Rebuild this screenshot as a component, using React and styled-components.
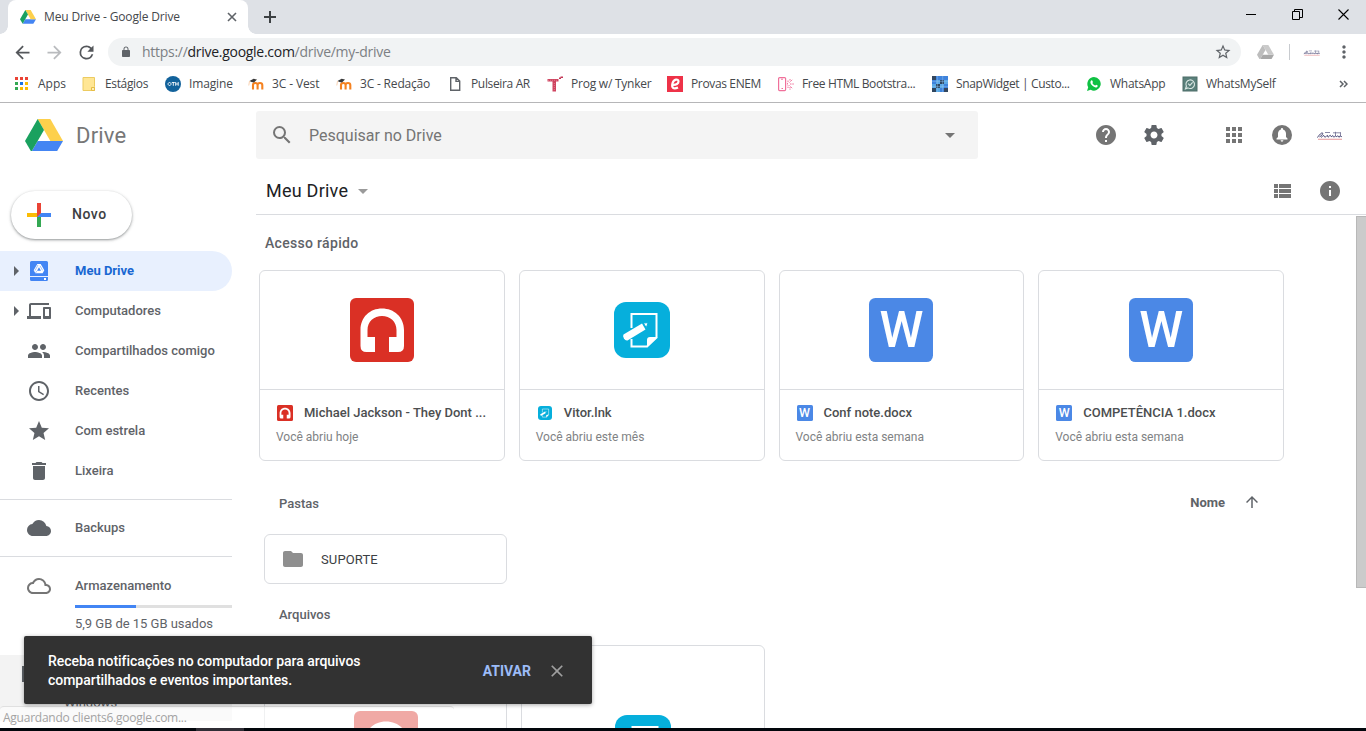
import React from "react";
import styled, { createGlobalStyle } from "styled-components";

const Global = createGlobalStyle`
  * { box-sizing: border-box; }
  html, body { margin: 0; padding: 0; overflow: hidden; background: #fff; }
  svg { display: block; flex: none; }
`;

/* ---------- icons ---------- */
const PATHS = {
  back: "M20 11H7.83l5.59-5.59L12 4l-8 8 8 8 1.41-1.41L7.83 13H20v-2z",
  forward: "M12 4l-1.41 1.41L16.17 11H4v2h12.17l-5.58 5.59L12 20l8-8z",
  reload: "M17.65 6.35A7.96 7.96 0 0 0 12 4a8 8 0 1 0 7.73 10h-2.08A6 6 0 1 1 12 6c1.66 0 3.14.69 4.22 1.78L13 11h7V4l-2.35 2.35z",
  lock: "M18 8h-1V6c0-2.76-2.24-5-5-5S7 3.24 7 6v2H6c-1.1 0-2 .9-2 2v10c0 1.100.9 2 2 2h12c1.1 0 2-.9 2-2V10c0-1.100-.9-2-2-2zM8.900 8V6c0-1.710 1.390-3.100 3.100-3.100s3.100 1.390 3.100 3.100v2H8.900z",
  starBorder: "M22 9.240l-7.190-.620L12 2 9.190 8.630 2 9.240l5.460 4.730L5.820 21 12 17.270 18.180 21l-1.630-7.030L22 9.240zM12 15.400l-3.760 2.270 1-4.280-3.320-2.880 4.380-.380L12 6.100l1.710 4.040 4.380.380-3.320 2.880 1 4.280L12 15.400z",
  search: "M15.500 14h-.79l-.28-.27A6.471 6.471 0 0 0 16 9.500 6.500 6.500 0 1 0 9.500 16c1.610 0 3.090-.59 4.230-1.570l.27.28v.79l5 4.990L20.490 19l-4.990-5zm-6 0C7.010 14 5 11.990 5 9.500S7.010 5 9.500 5 14 7.010 14 9.500 11.990 14 9.500 14z",
  drop: "M7 10l5 5 5-5z",
  caret: "M10 17l5-5-5-5z",
  help: "M12 2C6.480 2 2 6.480 2 12s4.480 10 10 10 10-4.480 10-10S17.520 2 12 2zm1 17h-2v-2h2v2zm2.070-7.750l-.9.920C13.450 12.900 13 13.500 13 15h-2v-.5c0-1.100.450-2.100 1.170-2.830l1.240-1.260c.370-.360.590-.860.590-1.410 0-1.100-.9-2-2-2s-2 .9-2 2H8c0-2.210 1.790-4 4-4s4 1.790 4 4c0 .880-.360 1.680-.930 2.250z",
  gear: "M19.430 12.980c.04-.32.07-.64.07-.98s-.03-.66-.07-.98l2.110-1.650c.19-.15.24-.42.12-.64l-2-3.460c-.12-.22-.39-.3-.61-.22l-2.490 1c-.52-.4-1.080-.73-1.690-.98l-.38-2.650A.488.488 0 0 0 14 2h-4c-.25 0-.46.18-.49.42l-.38 2.650c-.61.25-1.170.59-1.690.98l-2.490-1c-.23-.09-.49 0-.61.22l-2 3.460c-.13.22-.07.49.12.64l2.110 1.650c-.04.32-.07.65-.07.98s.03.66.07.98l-2.110 1.650c-.19.15-.24.42-.12.64l2 3.460c.12.22.39.3.61.22l2.490-1c.52.4 1.080.73 1.690.98l.38 2.650c.03.24.24.42.49.42h4c.25 0 .46-.18.49-.42l.38-2.650c.61-.25 1.170-.59 1.690-.98l2.490 1c.23.09.49 0 .61-.22l2-3.460c.12-.22.07-.49-.12-.64l-2.110-1.650zM12 15.500c-1.930 0-3.500-1.570-3.500-3.500s1.570-3.500 3.500-3.500 3.500 1.570 3.500 3.500-1.570 3.500-3.500 3.500z",
  apps: "M4 8h4V4H4v4zm6 12h4v-4h-4v4zm-6 0h4v-4H4v4zm0-6h4v-4H4v4zm6 0h4v-4h-4v4zm6-10v4h4V4h-4zm-6 4h4V4h-4v4zm6 6h4v-4h-4v4zm0 6h4v-4h-4v4z",
  list: "M4 14h4v-4H4v4zm0 5h4v-4H4v4zM4 9h4V5H4v4zm5 5h12v-4H9v4zm0 5h12v-4H9v4zM9 5v4h12V5H9z",
  info: "M12 2C6.480 2 2 6.480 2 12s4.480 10 10 10 10-4.480 10-10S17.520 2 12 2zm1 15h-2v-6h2v6zm0-8h-2V7h2v2z",
  devices: "M4 6h18V4H4c-1.100 0-2 .9-2 2v11H0v3h14v-3H4V6zm19 2h-6c-.55 0-1 .45-1 1v10c0 .55.45 1 1 1h6c.55 0 1-.45 1-1V9c0-.55-.45-1-1-1zm-1 9h-4v-7h4v7z",
  people: "M16 11c1.660 0 2.990-1.340 2.990-3S17.660 5 16 5s-3 1.340-3 3 1.340 3 3 3zm-8 0c1.660 0 2.990-1.340 2.990-3S9.660 5 8 5 5 6.340 5 8s1.340 3 3 3zm0 2c-2.330 0-7 1.170-7 3.500V19h14v-2.500C15 14.170 10.330 13 8 13zm8 0c-.29 0-.62.02-.97.05C16.190 13.890 17 15.020 17 16.500V19h6v-2.500c0-2.330-4.670-3.500-7-3.500z",
  clock: "M11.990 2C6.470 2 2 6.480 2 12s4.470 10 9.990 10C17.520 22 22 17.520 22 12S17.520 2 11.990 2zM12 20c-4.420 0-8-3.580-8-8s3.580-8 8-8 8 3.580 8 8-3.580 8-8 8zm.5-13H11v6l5.250 3.150.75-1.230-4.500-2.670z",
  star: "M12 17.270L18.180 21l-1.640-7.030L22 9.240l-7.190-.61L12 2 9.190 8.630 2 9.240l5.460 4.730L5.820 21z",
  trash: "M6 19c0 1.100.9 2 2 2h8c1.100 0 2-.9 2-2V7H6v12zM19 4h-3.500l-1-1h-5l-1 1H5v2h14V4z",
  cloud: "M19.350 10.040A7.490 7.490 0 0 0 12 4C9.110 4 6.600 5.640 5.350 8.040A5.994 5.994 0 0 0 0 14c0 3.310 2.690 6 6 6h13c2.760 0 5-2.240 5-5 0-2.640-2.050-4.780-4.650-4.960z",
  cloudOutline: "M19.350 10.040A7.490 7.490 0 0 0 12 4C9.110 4 6.600 5.640 5.350 8.040A5.994 5.994 0 0 0 0 14c0 3.310 2.690 6 6 6h13c2.760 0 5-2.240 5-5 0-2.640-2.050-4.780-4.650-4.960zM19 18H6c-2.210 0-4-1.790-4-4s1.790-4 4-4h.71C7.370 7.690 9.480 6 12 6c3.040 0 5.500 2.460 5.500 5.500v.5H19c1.660 0 3 1.340 3 3s-1.340 3-3 3z",
  folder: "M10 4H4c-1.100 0-2 .9-2 2v12c0 1.100.9 2 2 2h16c1.100 0 2-.9 2-2V8c0-1.100-.9-2-2-2h-8l-2-2z",
  up: "M4 12l1.410 1.410L11 7.830V20h2V7.830l5.580 5.590L20 12l-8-8-8 8z",
  close: "M19 6.410L17.590 5 12 10.590 6.410 5 5 6.410 10.590 12 5 17.590 6.410 19 12 13.410 17.590 19 19 17.590 13.410 12z",
  dots: "M12 8c1.100 0 2-.9 2-2s-.9-2-2-2-2 .9-2 2 .9 2 2 2zm0 2c-1.100 0-2 .9-2 2s.9 2 2 2 2-.9 2-2-.9-2-2-2zm0 6c-1.100 0-2 .9-2 2s.9 2 2 2 2-.9 2-2-.9-2-2-2z",
};
const Icon = ({ name, size = 24, color = "#757575" }) => (
  <svg width={size} height={size} viewBox="0 0 24 24" fill={color}><path d={PATHS[name]} /></svg>
);

const DriveLogo = ({ width, gray }) => {
  const [g, b, y] = gray ? ["#bdbdbd", "#a8a8a8", "#cacaca"] : ["#1aa15f", "#4485f3", "#fdd04c"];
  return (
    <svg width={width} height={width * 0.8662} viewBox="0 0 1443 1250">
      <path fill={b} d="M240 1250L481 833H1443L1202 1250z" />
      <path fill={y} d="M962 833H1443L962 0H481z" />
      <path fill={g} d="M0 833L240 1250 722 417 481 0z" />
    </svg>
  );
};

const Signature = ({ width }) => (
  <svg width={width} height={width / 2} viewBox="0 0 28 14" fill="none">
    <path d="M1.500 9.500c2-3 4-5 5-4.500s-1 3-3 3.800M5.500 9.500c1-2 2.500-2.500 2.500-1.500s1.500 1.500 2.500.2 1.200-.9 1.200.2 1.200.6 2-.8 1 1.800 2 1 .8-1.800 1.500-.2 1.500.4 2-.6.8 1.600 1.600.8 1.200-1.400 1.700 0 1 .6 1.500-.6.8 1.200 1.800.6" stroke="#3b3a6b" strokeWidth="1" />
    <path d="M9 4.500h5M17 4.800h8M19.500 3.800v4M24.500 4.500v4" stroke="#6c6b91" strokeWidth=".8" />
    <path d="M2 11.300H26" stroke="#eba7aa" strokeWidth="1.200" />
  </svg>
);

const Bell = () => (
  <svg width="24" height="24" viewBox="0 0 24 24">
    <circle cx="12" cy="12" r="10" fill="#757575" />
    <path fill="#fff" d="M6.500 16.500v-1l1.500-1.500V10.500C8 8.500 9.200 6.900 11 6.400V5.900c0-1.200 2-1.200 2 0v.5c1.800.5 3 2.100 3 4.100V14l1.500 1.500v1zM10.600 17.300h2.800a1.400 1.400 0 0 1-2.800 0z" />
  </svg>
);

const MoodleIcon = () => (
  <svg width="16" height="16" viewBox="0 0 16 16" fill="none">
    <path d="M5 13.500V9c0-2.700 4.600-2.700 4.600 0V13.500M9.600 9c0-2.700 4.700-2.700 4.700 0V13.500" stroke="#f58220" strokeWidth="2.100" />
    <path d="M1.500 5L5.600 2.800 9 3.600 6 6.600 3.500 6z" fill="#3a3a3a" />
    <path d="M1.500 5L.8 9.500" stroke="#f7c79e" strokeWidth=".8" />
  </svg>
);

const BOOK_ICONS = {
  apps: (
    <svg width="16" height="16" viewBox="0 0 16 16">
      {["#ea4335", "#ea4335", "#ea4335", "#34a853", "#1a73e8", "#fbbc04", "#34a853", "#fbbc04", "#fbbc04"].map((c, i) => (
        <rect key={i} x={1 + (i % 3) * 5} y={1 + Math.floor(i / 3) * 5} width="3" height="3" fill={c} />
      ))}
    </svg>
  ),
  folder: (
    <svg width="16" height="16" viewBox="0 0 16 16">
      <path d="M2 1.500h11.500v9l-.0 4H2z" fill="#ffe694" stroke="#eccb61" />
      <path d="M10.500 14.500v-3h3v3z" fill="#ffefb5" stroke="#e6bd44" />
    </svg>
  ),
  oth: (
    <svg width="16" height="16" viewBox="0 0 16 16">
      <circle cx="8" cy="8" r="8" fill="#12629b" />
      <path d="M4.500 6.500a1.500 1.500 0 1 0 .1 0M6.800 6.500h3M8.300 6.500v3.300M10.700 6v3.800M13.200 6v3.800M10.700 8h2.500" stroke="#fff" strokeWidth=".9" fill="none" />
    </svg>
  ),
  moodle: <MoodleIcon />,
  file: (
    <svg width="16" height="16" viewBox="0 0 16 16">
      <path d="M3.700 1.700h5.600l3.400 3.400v9.200H3.700zM9 1.700v3.700h3.700" fill="#fff" stroke="#5f6368" strokeWidth="1.400" />
    </svg>
  ),
  tynker: (
    <svg width="16" height="16" viewBox="0 0 16 16">
      <path d="M0.500 3h11v2.500H9v10H5.500v-10h-5z" fill="#cf4460" />
      <path d="M12 2.500V1.500h1.500V.5H16v1.500h-2v1h-2z" fill="#c23655" />
      <path d="M1 4.300h10M7.300 7v8" stroke="#e58a9b" strokeWidth=".8" strokeDasharray="1 1" />
    </svg>
  ),
  enem: (
    <svg width="16" height="16" viewBox="0 0 16 16">
      <rect width="16" height="16" fill="#ee3248" />
      <path d="M5.500 8.800c4 .2 6-1.300 6-3.300 0-3-4.800-2.500-6 1.700-1.200 4.500 1 6.500 5.500 4.300" stroke="#fff" strokeWidth="2.200" fill="none" />
    </svg>
  ),
  html: (
    <svg width="16" height="16" viewBox="0 0 16 16" fill="none" stroke="#f0709a">
      <rect x=".6" y="1.600" width="7" height="13" rx="1" strokeWidth="1.200" />
      <path d="M3 3.200h2M3.500 12.500h1.500" />
      <path d="M10 4.500V7L9 8l1 1.200V12M12 3v2M11.500 6.500l3-3M12 8h4M11.500 9.500l3 3M12 11v3" strokeDasharray="1.500 .8" />
    </svg>
  ),
  snap: (
    <svg width="16" height="16" viewBox="0 0 16 16">
      {["#33475f", "#3f83dc", "#3f83dc", "#3f83dc", "#3f83dc", "#5aa9e6", "#2e465f", "#5aa9e6", "#5aa9e6", "#2e465f", "#5aa9e6", "#3f83dc", "#2e465f", "#5aa9e6", "#3f83dc", "#33475f"].map((c, i) => (
        <rect key={i} x={(i % 4) * 4} y={Math.floor(i / 4) * 4} width="4" height="4" fill={c} />
      ))}
      <path d="M5.300 0v16M10.700 0v16M0 5.300h16M0 10.700h16" stroke="#8ec1ee" strokeWidth=".5" />
    </svg>
  ),
  whatsapp: (
    <svg width="16" height="16" viewBox="0 0 16 16">
      <path d="M8 1a6.800 6.800 0 1 1-3.300 12.800L1 15l1.200-3.700A6.900 6.900 0 0 1 8 1z" fill="#0fc143" />
      <path d="M5.200 4.600c.6-.6 1-.4 1.200.1l.5 1.200c.1.400-.6 1-.6 1.200.6 1.200 1.500 2 2.700 2.500.4 0 .9-1 1.200-.9l1.400.7c.5.3-.2 1.900-1.500 2-2.500.1-5.700-3-5.700-5.100 0-.7.400-1.300.8-1.700z" fill="#fff" />
    </svg>
  ),
  myself: (
    <svg width="16" height="16" viewBox="0 0 16 16" fill="none" stroke="#dbe7e4">
      <rect x="1" y="1" width="14" height="14" fill="#5a807b" stroke="#4c6d69" />
      <path d="M3.500 12.800l.9-2.600a4.300 4.300 0 1 1 1.600 1.700z" strokeWidth="1.100" />
      <path d="M6.200 7.700l1.700 1.700 2.700-3" strokeWidth="1.100" />
    </svg>
  ),
};

/* ---------- browser chrome ---------- */
const Window = styled.div`
  position: relative;
  width: 1366px;
  height: 731px;
  display: flex;
  flex-direction: column;
  overflow: hidden;
  background: #fff;
  font-family: Roboto, "Liberation Sans", sans-serif;
`;
const TabStrip = styled.div`
  height: 34px;
  flex: none;
  display: flex;
  background: #dee1e6;
`;
const TabFoot = styled.div`
  width: 8px;
  background: radial-gradient(circle at ${(p) => (p.$right ? "100% 0" : "0 0")}, #dee1e6 7.500px, #fff 8px) bottom / 8px 8px no-repeat;
`;
const Tab = styled.div`
  width: 240px;
  padding: 0 10px 0 12px;
  display: flex;
  align-items: center;
  background: #fff;
  border-radius: 8px 8px 0 0;
`;
const TabTitle = styled.span`
  flex: 1;
  margin-left: 8px;
  font: 12px/16px "Open Sans", "Noto Sans", sans-serif;
  letter-spacing: -0.150px;
  color: #45484c;
  white-space: nowrap;
`;
const NewTab = styled.div`
  display: flex;
  align-items: center;
  margin-left: 8px;
`;
const WindowControls = styled.div`
  margin-left: auto;
  height: 28px;
  display: flex;
  align-items: center;
  gap: 35px;
  padding-right: 17px;
`;
const Toolbar = styled.div`
  height: 36px;
  flex: none;
  display: flex;
  align-items: center;
`;
const NavButtons = styled.div`
  display: flex;
  gap: 11px;
  width: 108px;
  padding-left: 12px;
`;
const Omnibox = styled.div`
  width: 1133px;
  height: 28px;
  padding: 0 9px 0 12px;
  display: flex;
  align-items: center;
  border-radius: 14px;
  background: #f1f3f4;
`;
const Url = styled.span`
  flex: 1;
  margin-left: 10px;
  font: 14px/20px "Open Sans", "Noto Sans", sans-serif;
  letter-spacing: -0.280px;
  color: #7c8084;
  b { font-weight: 400; color: #202124; }
`;
const Extensions = styled.div`
  flex: 1;
  display: flex;
  align-items: center;
  padding-left: 16px;
`;
const Separator = styled.div`
  width: 1px;
  height: 16px;
  margin: 0 13px 0 15px;
  background: #c8cbcf;
`;
const DotsSlot = styled.div`
  margin-left: 13px;
`;
const Bookmarks = styled.div`
  height: 33px;
  flex: none;
  display: flex;
  padding: 0 18px 4px 14px;
  align-items: center;
  border-bottom: 1px solid #b6b6b8;
`;
const Bookmark = styled.div`
  width: ${(p) => p.$w}px;
  display: flex;
  align-items: center;
  gap: 8px;
  font: 12px/16px "Open Sans", "Noto Sans", sans-serif;
  letter-spacing: ${(p) => p.$track || 0}px;
  color: #45484c;
  white-space: nowrap;
`;
const More = styled.div`
  margin-left: auto;
`;
const Taskbar = styled.div`
  height: 3px;
  flex: none;
  display: flex;
  padding-left: 196px;
  background: #02060c;
`;
const TaskbarItem = styled.div`
  width: 48px;
  background: #2f2d35;
`;

/* ---------- drive page ---------- */
const Page = styled.div`
  height: 625px;
  flex: none;
  overflow: hidden;
`;
const Header = styled.header`
  height: 64px;
  display: flex;
  align-items: center;
`;
const Brand = styled.div`
  width: 256px;
  padding-left: 25px;
  display: flex;
  align-items: center;
  gap: 13px;
  font-size: 22px;
  letter-spacing: 0.200px;
  color: #777;
`;
const SearchBox = styled.div`
  width: 722px;
  height: 48px;
  padding: 0 16px 0 14px;
  display: flex;
  align-items: center;
  border-radius: 3px;
  background: #f4f4f4;
`;
const Placeholder = styled.span`
  flex: 1;
  margin-left: 15px;
  font-size: 16px;
  letter-spacing: 0;
  color: #757575;
`;
const HeaderActions = styled.div`
  display: flex;
  align-items: center;
  padding-left: 116px;
`;
const Spacer = styled.div`
  width: ${(p) => p.$w}px;
  flex: none;
`;
const Body = styled.div`
  display: flex;
`;
const Sidebar = styled.nav`
  width: 256px;
  flex: none;
  padding-top: 24px;
`;
const NewButton = styled.div`
  width: 121px;
  height: 48px;
  margin-left: 11px;
  padding-left: 16px;
  display: flex;
  align-items: center;
  gap: 21px;
  border-radius: 24px;
  background: #fff;
  box-shadow: 0 1px 2px rgba(60, 64, 67, 0.400), 0 1px 3px 1px rgba(60, 64, 67, 0.150);
  font-size: 14px;
  font-weight: 500;
  letter-spacing: 0.550px;
  color: #3c4043;
`;
const NewLabel = styled.span`
  padding-bottom: 2px;
`;
const NavList = styled.div`
  margin-top: 12px;
`;
const NavItem = styled.div`
  width: 232px;
  height: ${(p) => p.$h || 40}px;
  display: flex;
  align-items: center;
  border-radius: 0 20px 20px 0;
  background: ${(p) => (p.$active ? "#e8f0fe" : "transparent")};
  color: ${(p) => (p.$active ? "#1967d2" : "#5f6368")};
  font-size: 13px;
  font-weight: ${(p) => (p.$active ? 700 : 500)};
  letter-spacing: 0;
`;
const CaretSlot = styled.div`
  width: 27px;
  display: flex;
  padding-left: 4px;
`;
const NavLabel = styled.span`
  margin-left: 24px;
  margin-top: -1px;
`;
const Rule = styled.div`
  width: 232px;
  height: 1px;
  margin: ${(p) => p.$m || "0"};
  background: #dadce0;
`;
const Storage = styled.div`
  margin: -1px 0 0 75px;
  width: 157px;
`;
const Meter = styled.div`
  height: 3px;
  background: linear-gradient(to right, #4285f4 61px, #e0e0e0 61px);
`;
const StorageText = styled.div`
  margin-top: 7px;
  font-size: 13px;
  line-height: 18px;
  letter-spacing: -0.020px;
  color: #5f6368;
`;
const DesktopPromo = styled.div`
  width: 232px;
  height: 66px;
  margin-top: 22px;
  padding: 11px 0 0 22px;
  display: flex;
  background: #f3f3f3;
  font-size: 13px;
  line-height: 16px;
  color: #5f6368;
`;
const PromoIcon = styled.div`
  width: 18px;
  height: 16px;
  margin-right: 24px;
  background: #5f6368;
`;
const PromoText = styled.div`
  padding-top: 29px;
  letter-spacing: 0;
`;
const Main = styled.main`
  width: 1110px;
`;
const TitleBar = styled.div`
  height: 48px;
  display: flex;
  align-items: center;
  padding: 0 24px 0 10px;
  border-bottom: 1px solid #dadce0;
`;
const Title = styled.h1`
  flex: 1;
  display: flex;
  align-items: center;
  gap: 3px;
  margin: 0;
  font-size: 18px;
  font-weight: 400;
  letter-spacing: 0.240px;
  color: #202124;
`;
const Content = styled.div`
  display: flex;
  height: 513px;
`;
const Scroll = styled.div`
  flex: 1;
  overflow: hidden;
`;
const ScrollTrack = styled.div`
  width: 10px;
  padding-top: 1px;
`;
const ScrollThumb = styled.div`
  height: 372px;
  border: 1px solid #b8b8b8;
  border-right: 0;
  background: #cbcbcb;
`;
const Quick = styled.h2`
  margin: 0;
  padding: 19px 0 0 9px;
  height: 55px;
  font-size: 14px;
  line-height: 18px;
  font-weight: 500;
  letter-spacing: 0.310px;
  color: #5f6368;
`;
const CardGrid = styled.div`
  width: 1025px;
  margin-left: 3px;
  display: grid;
  grid-template-columns: repeat(4, 1fr);
  gap: 14px;
`;
const Card = styled.div`
  min-width: 0;
  height: 191px;
  border: 1px solid #dadce0;
  border-radius: 6px;
`;
const Preview = styled.div`
  height: 119px;
  display: flex;
  align-items: center;
  justify-content: center;
  border-bottom: 1px solid #dadce0;
`;
const CardInfo = styled.div`
  padding: 13px 16px 0;
`;
const CardName = styled.div`
  height: 20px;
  display: flex;
  align-items: center;
  font-size: 13px;
  font-weight: 500;
  letter-spacing: 0;
  color: #4c4e50;
`;
const SmallIcon = styled.div`
  width: 28px;
  flex: none;
  display: flex;
  padding-left: ${(p) => (p.$link ? 2 : 1)}px;
`;
const NameText = styled.span`
  padding-bottom: 2px;
  white-space: nowrap;
`;
const CardMeta = styled.div`
  margin-top: 5px;
  font-size: 12px;
  line-height: 18px;
  letter-spacing: 0;
  color: #808284;
`;
const WordTile = styled.div`
  width: ${(p) => p.$s}px;
  height: ${(p) => p.$s}px;
  padding-top: ${(p) => p.$s / 24}px;
  display: flex;
  align-items: center;
  justify-content: center;
  border-radius: ${(p) => p.$s / 10}px;
  background: #4b88e6;
  color: #fff;
  font-size: ${(p) => p.$s * 0.780}px;
  font-weight: 500;
  line-height: 1;
  letter-spacing: 0;
`;
const SectionRow = styled.div`
  display: flex;
  align-items: center;
  height: 20px;
  margin-top: ${(p) => p.$top}px;
  padding: 0 95px 0 23px;
  font-size: 13px;
  font-weight: 500;
  letter-spacing: 0;
  color: #5f6368;
`;
const Sort = styled.div`
  margin-left: auto;
  display: flex;
  align-items: center;
  gap: 18px;
  font-weight: 700;
  margin-top: -2px;
`;
const Folder = styled.div`
  width: 243px;
  height: 50px;
  margin: 21px 0 0 8px;
  padding-left: 16px;
  display: flex;
  align-items: center;
  gap: 16px;
  border: 1px solid #dadce0;
  border-radius: 6px;
  font-size: 13px;
  letter-spacing: 0.120px;
  color: #3c4043;
`;
const Files = styled.div`
  display: flex;
  gap: 14px;
  margin: 21px 0 0 8px;
`;
const FileCard = styled.div`
  width: ${(p) => p.$w}px;
  height: 191px;
  padding-top: ${(p) => p.$pad}px;
  display: flex;
  justify-content: center;
  align-items: flex-start;
  border: 1px solid #dadce0;
  border-radius: 6px;
`;

/* ---------- overlays ---------- */
const StatusBubble = styled.div`
  position: absolute;
  left: 0;
  top: 706px;
  width: 454px;
  height: 22px;
  padding-left: 3px;
  border-top: 1px solid rgba(190, 190, 190, 0.450);
  border-radius: 4px 4px 0 0;
  background: rgba(255, 255, 255, 0.590);
  font: 12px/22px "Open Sans", "Noto Sans", sans-serif;
  letter-spacing: -0.250px;
  color: #a3a3a3;
`;
const Toast = styled.div`
  position: absolute;
  left: 24px;
  top: 636px;
  width: 568px;
  height: 68px;
  padding: 2px 25px 0 24px;
  display: flex;
  align-items: center;
  border-radius: 2px;
  background: #323232;
  box-shadow: 0 1px 4px rgba(0, 0, 0, 0.350);
  color: #fff;
`;
const ToastText = styled.p`
  flex: 1;
  margin: 0;
  font-size: 14px;
  line-height: 19px;
  font-weight: 500;
  letter-spacing: -0.040px;
`;
const ToastAction = styled.span`
  margin-right: 16px;
  font-size: 14px;
  font-weight: 700;
  color: #9cbcf8;
`;

const AudioIcon = ({ size }) => (
  <svg width={size} height={size} viewBox="0 0 64 64">
    <rect width="64" height="64" rx="6" fill="#da3025" />
    <path fill="#fff" d="M10.500 32C10.500 19 20 10.500 32 10.500S54 19 54 32V48q0 6-6 6H39V39H46.500V32C46.500 23.500 40 18 32 18S17.500 23.500 17.500 32V39H25V54H16.500q-6 0-6-6z" />
  </svg>
);
const LinkIcon = ({ size }) => (
  <svg width={size} height={size} viewBox="0 0 56 56">
    <rect width="56" height="56" rx="12" fill="#06afdc" />
    <path d="M17.500 26V12H42.500V35.500L33 44.500H17.500V37" fill="none" stroke="#fff" strokeWidth="2" />
    <path d="M33 45.500V38q0-3 3-3h7.500z" fill="#fff" />
    <path d="M9.500 32.500L28 21.500l3.500 6L13.500 38.500q-2.200.4-3.600-2T9.500 32.500z" fill="#fff" />
    <path d="M29.300 21l4.800-.3-1.800 5z" fill="#fff" stroke="#06afdc" strokeWidth="1" />
  </svg>
);
const FileIcon = ({ kind, large }) =>
  kind === "audio" ? <AudioIcon size={large ? 64 : 16} />
  : kind === "link" ? <LinkIcon size={large ? 56 : 14} />
  : <WordTile $s={large ? 64 : 16}>W</WordTile>;

const MyDriveIcon = () => (
  <svg width="24" height="24" viewBox="0 0 24 24">
    <path d="M4.500 2h15A1.500 1.500 0 0 1 21 3.500V17H3V3.500A1.500 1.500 0 0 1 4.500 2zM3 18h18v2.500a1.500 1.500 0 0 1-1.500 1.500h-15A1.500 1.500 0 0 1 3 20.500z" fill="#4285f4" />
    <path d="M10.300 5h3.400l3.600 6.300-1.700 3H8.400l-1.700-3z" fill="#fff" />
    <path d="M12 8.200l2 3.600h-4z" fill="#4285f4" />
    <path d="M11 6l-3 5.600M13 6.800l2.600 4.600M9.700 12.200L8.500 14" stroke="#4285f4" strokeWidth=".5" />
    <rect x="17" y="19" width="2" height="2" fill="#fff" />
  </svg>
);
const PlusIcon = () => (
  <svg width="24" height="24" viewBox="0 0 24 24">
    <path d="M10 0h4v10l-4 4z" fill="#ea4335" />
    <path d="M0 10h10v4H0z" fill="#fbbc04" />
    <path d="M10 14l4-4v14h-4z" fill="#34a853" />
    <path d="M14 10h10v4H10z" fill="#4285f4" />
    <path d="M10 10h4l-4 4z" fill="#ea4335" />
  </svg>
);

const bookmarks = [
  ["apps", "Apps", 67, 0],
  ["folder", "Estágios", 84, -0.35],
  ["oth", "Imagine", 83, -0.15],
  ["moodle", "3C - Vest", 88, -0.12],
  ["moodle", "3C - Redação", 111, -0.18],
  ["file", "Pulseira AR", 100, -0.35],
  ["tynker", "Prog w/ Tynker", 120, -0.23],
  ["enem", "Provas ENEM", 111, -0.36],
  ["html", "Free HTML Bootstra...", 154, -0.36],
  ["snap", "SnapWidget | Custo...", 154, -0.37],
  ["whatsapp", "WhatsApp", 96, -0.25],
  ["myself", "WhatsMySelf", 100, -0.25],
];
const nav = [
  ["people", "Compartilhados comigo"],
  ["clock", "Recentes"],
  ["star", "Com estrela"],
  ["trash", "Lixeira"],
];
const quick = [
  ["audio", "Michael Jackson - They Dont ...", "Você abriu hoje"],
  ["link", "Vitor.lnk", "Você abriu este mês"],
  ["word", "Conf note.docx", "Você abriu esta semana"],
  ["word", "COMPETÊNCIA 1.docx", "Você abriu esta semana"],
];

export default function App() {
  return (
    <Window>
      <Global />
      <TabStrip>
        <TabFoot />
        <Tab>
          <DriveLogo width={16} />
          <TabTitle>Meu Drive - Google Drive</TabTitle>
          <svg width="12" height="12" viewBox="0 0 12 12"><path d="M2 2l8 8M10 2l-8 8" stroke="#5f6368" strokeWidth="1.600" /></svg>
        </Tab>
        <TabFoot $right />
        <NewTab>
          <svg width="12" height="12" viewBox="0 0 12 12"><path d="M6 0v12M0 6h12" stroke="#3c4043" strokeWidth="2" /></svg>
        </NewTab>
        <WindowControls>
          <svg width="11" height="11" viewBox="0 0 11 11"><path d="M0 5.500h10" stroke="#000" /></svg>
          <svg width="11" height="11" viewBox="0 0 11 11"><path d="M.5 2.500h7v8h-7zM2.500 2.500v-2h8v8h-2.500" fill="none" stroke="#000" /></svg>
          <svg width="11" height="11" viewBox="0 0 11 11"><path d="M.5.5l10 10M10.500.5l-10 10" stroke="#000" strokeWidth="1.100" /></svg>
        </WindowControls>
      </TabStrip>
      <Toolbar>
        <NavButtons>
          <Icon name="back" size={21} color="#54575b" />
          <Icon name="forward" size={21} color="#b9bbbe" />
          <Icon name="reload" size={21} color="#54575b" />
        </NavButtons>
        <Omnibox>
          <Icon name="lock" size={12} color="#5f6368" />
          <Url>https://<b>drive.google.com</b>/drive/my-drive</Url>
          <Icon name="starBorder" size={18} color="#5f6368" />
        </Omnibox>
        <Extensions>
          <DriveLogo width={17} gray />
          <Separator />
          <Signature width={18} />
          <DotsSlot><Icon name="dots" size={20} color="#5f6368" /></DotsSlot>
        </Extensions>
      </Toolbar>
      <Bookmarks>
        {bookmarks.map(([icon, label, w, track]) => (
          <Bookmark key={label} $w={w} $track={track}>{BOOK_ICONS[icon]}{label}</Bookmark>
        ))}
        <More>
          <svg width="9" height="8" viewBox="0 0 9 8"><path d="M1 1l3 3-3 3M5 1l3 3-3 3" fill="none" stroke="#5f6368" strokeWidth="1.500" /></svg>
        </More>
      </Bookmarks>

      <Page>
        <Header>
          <Brand><DriveLogo width={38} />Drive</Brand>
          <SearchBox>
            <Icon name="search" />
            <Placeholder>Pesquisar no Drive</Placeholder>
            <Icon name="drop" />
          </SearchBox>
          <HeaderActions>
            <Icon name="help" />
            <Spacer $w={24} />
            <Icon name="gear" color="#5f6368" />
            <Spacer $w={56} />
            <Icon name="apps" />
            <Spacer $w={24} />
            <Bell />
            <Spacer $w={22} />
            <Signature width={28} />
          </HeaderActions>
        </Header>
        <Body>
          <Sidebar>
            <NewButton><PlusIcon /><NewLabel>Novo</NewLabel></NewButton>
            <NavList>
              <NavItem $active>
                <CaretSlot><Icon name="caret" color="#5f6368" /></CaretSlot>
                <MyDriveIcon /><NavLabel>Meu Drive</NavLabel>
              </NavItem>
              <NavItem>
                <CaretSlot><Icon name="caret" color="#5f6368" /></CaretSlot>
                <Icon name="devices" color="#5f6368" /><NavLabel>Computadores</NavLabel>
              </NavItem>
              {nav.map(([icon, label]) => (
                <NavItem key={label}>
                  <CaretSlot />
                  <Icon name={icon} color="#5f6368" /><NavLabel>{label}</NavLabel>
                </NavItem>
              ))}
            </NavList>
            <Rule $m="8px 0 8px" />
            <NavItem>
              <CaretSlot />
              <Icon name="cloud" color="#5f6368" /><NavLabel>Backups</NavLabel>
            </NavItem>
            <Rule $m="8px 0 9px" />
            <NavItem>
              <CaretSlot />
              <Icon name="cloudOutline" /><NavLabel>Armazenamento</NavLabel>
            </NavItem>
            <Storage>
              <Meter />
              <StorageText>5,9 GB de 15 GB usados</StorageText>
            </Storage>
            <DesktopPromo><PromoIcon /><PromoText>Windows</PromoText></DesktopPromo>
          </Sidebar>
          <Main>
            <TitleBar>
              <Title>Meu Drive<Icon name="drop" color="#9a9a9a" /></Title>
              <Icon name="list" />
              <Spacer $w={24} />
              <Icon name="info" />
            </TitleBar>
            <Content>
              <Scroll>
                <Quick>Acesso rápido</Quick>
                <CardGrid>
                  {quick.map(([kind, name, meta]) => (
                    <Card key={name}>
                      <Preview><FileIcon kind={kind} large /></Preview>
                      <CardInfo>
                        <CardName>
                          <SmallIcon $link={kind === "link"}><FileIcon kind={kind} /></SmallIcon>
                          <NameText>{name}</NameText>
                        </CardName>
                        <CardMeta>{meta}</CardMeta>
                      </CardInfo>
                    </Card>
                  ))}
                </CardGrid>
                <SectionRow $top={32}>
                  Pastas
                  <Sort>Nome<Icon name="up" size={18} color="#5f6368" /></Sort>
                </SectionRow>
                <Folder><Icon name="folder" color="#8f8f8f" />SUPORTE</Folder>
                <SectionRow $top={20}>Arquivos</SectionRow>
                <Files>
                  <FileCard $w={243} $pad={65}><FileIcon kind="audio" large /></FileCard>
                  <FileCard $w={244} $pad={69}><FileIcon kind="link" large /></FileCard>
                </Files>
              </Scroll>
              <ScrollTrack><ScrollThumb /></ScrollTrack>
            </Content>
          </Main>
        </Body>
      </Page>
      <Taskbar><TaskbarItem /></Taskbar>

      <StatusBubble>Aguardando clients6.google.com...</StatusBubble>
      <Toast>
        <ToastText>Receba notificações no computador para arquivos<br />compartilhados e eventos importantes.</ToastText>
        <ToastAction>ATIVAR</ToastAction>
        <Icon name="close" size={20} color="#a0a0a0" />
      </Toast>
    </Window>
  );
}
